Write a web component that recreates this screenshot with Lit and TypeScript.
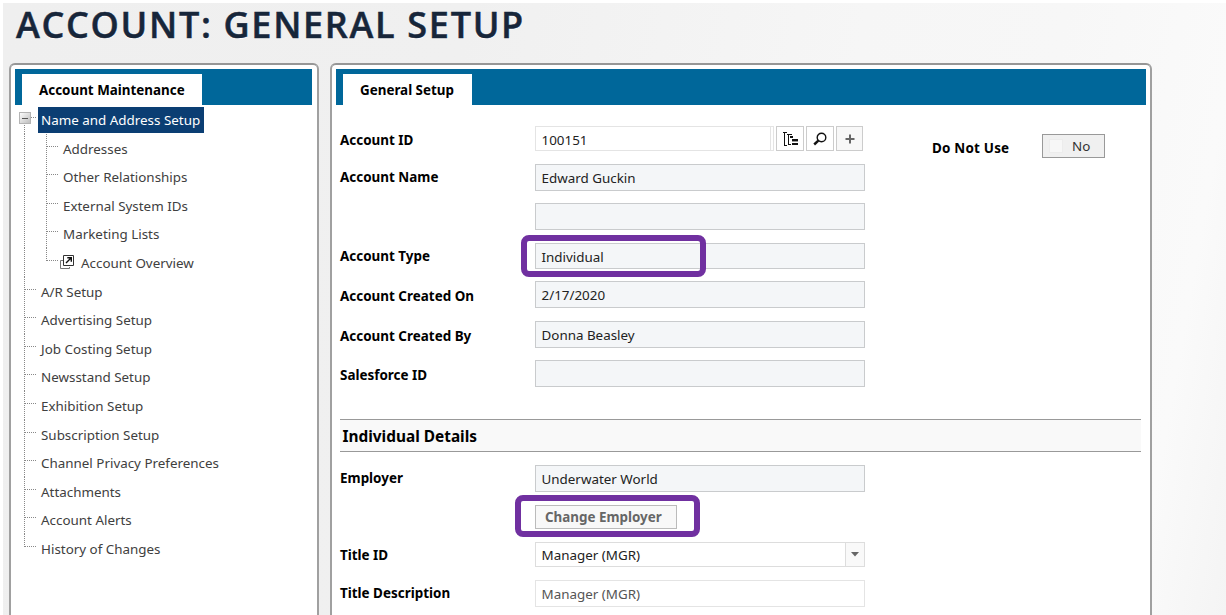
import { LitElement, html, css, svg, nothing } from "lit";
import { customElement } from "lit/decorators.js";
import { classMap } from "lit/directives/class-map.js";
import { styleMap } from "lit/directives/style-map.js";

type Field = { label: string; value: string; kind: string; gap: number; low?: boolean };

const children = ["Addresses", "Other Relationships", "External System IDs", "Marketing Lists", "Account Overview"];
const roots = [
  "A/R Setup", "Advertising Setup", "Job Costing Setup", "Newsstand Setup", "Exhibition Setup",
  "Subscription Setup", "Channel Privacy Preferences", "Attachments", "Account Alerts", "History of Changes",
];

const general: Field[] = [
  { label: "Account Name", value: "Edward Guckin", kind: "ro", gap: 39 },
  { label: "", value: "", kind: "ro", gap: 40 },
  { label: "Account Type", value: "Individual", kind: "ro short", gap: 38 },
  { label: "Account Created On", value: "2/17/2020", kind: "ro", gap: 40, low: true },
  { label: "Account Created By", value: "Donna Beasley", kind: "ro", gap: 39, low: true },
  { label: "Salesforce ID", value: "", kind: "ro", gap: 40, low: true },
];

@customElement("app-root")
export class AppRoot extends LitElement {
  static styles = css`
    :host {
      display: block; width: 1226px; height: 615px; overflow: hidden; box-sizing: border-box;
      border-left: 3px solid #fff; border-top: 3px solid #fff;
      font-family: "Noto Sans", "Open Sans", sans-serif; font-size: 13.4px; color: #404040;
      background: linear-gradient(100deg, #efefef 0, #f0f0f0 35%, #f6f6f6 65%, #f7f7f7 80%, #fafafa 93%, #f4f4f4 100%);
    }
    * { box-sizing: border-box; }
    h1 {
      margin: 0; height: 60px; padding-left: 13px; line-height: 44px; font-size: 36px; font-weight: 600;
      letter-spacing: 1.7px; -webkit-text-stroke: 0.5px #17263a;
      font-family: "Open Sans", sans-serif; color: #17263a; white-space: nowrap; text-shadow: 0 1px 1px #fff;
    }
    .cols { display: flex; gap: 11px; padding-left: 6px; align-items: flex-start; }
    .panel {
      height: 580px; background: #fff; border: 2px solid #a0a0a0; border-top-color: #969696;
      border-radius: 6px; padding: 4px;
    }
    .side { width: 310px; padding-right: 5px; }
    .main { width: 822px; }
    .bar { height: 36px; background: #00679a; padding: 5px 0 0 7px; display: flex; }
    .tab {
      background: #fff; height: 31px; line-height: 33px; padding: 0 17px; color: #000; font-weight: 700;
      font-size: 13.4px; white-space: nowrap;
    }
    .tab.a { width: 180px; }
    .tab.b { width: 129px; }
    .main .bar { width: 810px; }
    .tree { padding-left: 4px; display: flex; flex-direction: column; }
    .row { height: 28.6px; display: flex; white-space: nowrap; line-height: 30.4px; }
    .g { flex: none; }
    .guide { display: flex; }
    .link { flex: none; margin: 2px 4px 0 -4px; }
    .cur {
      background: #0b3e73; color: #fff; height: 26px; line-height: 26px; padding: 0 3px; margin: 2px 0 0 -3px; width: 166px;
    }
    .form { padding-left: 4px; position: relative; }
    .f { display: grid; grid-template-columns: 195px 1fr; }
    .l { font-weight: 700; font-size: 13.45px; color: #000; line-height: 27px; height: 27px; }
    .l.low { line-height: 31px; }
    .box {
      width: 330px; height: 27px; border: 1px solid #c9cbcd; background: #f4f6f8; padding-left: 5.5px;
      line-height: 27px; color: #222; white-space: nowrap;
    }
    .short { height: 26px; }
    .edit { background: #fff; border-color: #e4e4e4; color: #555; }
    .idrow { display: flex; height: 25px; }
    .idrow .box { width: 236px; height: 25px; line-height: 26px; color: #222; }
    .edge { width: 3px; height: 25px; border: 1px solid #e4e4e4; border-left: 0; margin-right: 2px; }
    .ib {
      width: 28px; height: 25px; border: 1px solid #ccc; background: #fff; margin-right: 2px; padding: 0; display: flex;
      align-items: center; justify-content: center;
    }
    .ib.p { background: #f8f8f8; width: 27px; }
    .head { padding-top: 21px; height: 59px; display: flex; }
    .head .l { line-height: 29px; }
    .dnu {
      font-weight: 700; font-size: 13.45px; color: #000; margin: 8px 0 0 67px; width: 110px; line-height: 29px;
      letter-spacing: 0.2px; white-space: nowrap;
    }
    .no {
      width: 63px; height: 24px; border: 1px solid #999; background: #f0f0f0; padding: 0 0 0 6px; margin-top: 8px;
      display: flex; align-items: center; color: #333; line-height: 24px;
    }
    .chk { width: 14px; height: 14px; background: #f7f7f7; border: 1px solid #ececec; margin-right: 9px; }
    .sec {
      height: 33px; border-top: 1px solid #999; border-bottom: 1px solid #999; background: #f9f9f9; width: 801px;
      padding-left: 2.5px; line-height: 34px; color: #000; font-weight: 700; font-size: 15.4px; margin: 19px 0 13px;
    }
    .emp { height: 37px; }
    .btn {
      width: 142px; height: 24px; border: 1px solid #bbb; background: #f8f8f8; color: #666; font: inherit;
      font-size: 13.4px; font-weight: 700; padding: 0 0 0 9px; text-align: left; line-height: 22px; white-space: nowrap;
    }
    .title { height: 38px; }
    .title .l { line-height: 26px; }
    .sel { width: 330px; height: 25px; display: flex; border: 1px solid #ddd; background: #fff; }
    .sv { flex: 1; padding-left: 5.5px; line-height: 25px; color: #222; }
    .ar { width: 19px; border-left: 1px solid #ddd; background: #f9f9f9; display: flex; align-items: center; justify-content: center; }
    .hl { position: absolute; border: 6px solid #7030a0; border-radius: 8px; }
    .hl.one { left: 185px; top: 130px; width: 185px; height: 42px; }
    .hl.two { left: 179px; top: 390px; width: 185px; height: 42px; }
  `;

  private field(f: Field) {
    return html`<div class="f" style=${styleMap({ height: f.gap + "px" })}>
      <div class=${classMap({ l: true, low: !!f.low })}>${f.label}</div>
      <div class="box ${f.kind}">${f.value}</div>
    </div>`;
  }

  private guide(depth: number, last: boolean, more: boolean) {
    return html`<svg width=${depth ? 44 : 22} height="29" shape-rendering="crispEdges" stroke="#888" fill="none" stroke-dasharray="1 1">
      ${more ? svg`<path d="M5.5 0V29"/>` : nothing}
      ${depth
        ? svg`<path d="M27.5 0V${last ? 13 : 29}M27.5 12.5H39"/>`
        : svg`<path d="M5.5 0V${last ? 13 : 29}M5.5 12.5H17"/>`}
    </svg>`;
  }

  render() {
    return html`
      <h1>ACCOUNT: GENERAL SETUP</h1>
      <div class="cols">
        <section class="panel side">
          <div class="bar"><div class="tab a">Account Maintenance</div></div>
          <div class="tree">
            <div class="row">
              <svg class="g" width="22" height="29" shape-rendering="crispEdges" fill="none">
                <defs><linearGradient id="g" x2="1" y2="1"><stop stop-color="#fff"/><stop offset="1" stop-color="#bbb"/></linearGradient></defs>
                <rect x="0.5" y="7.5" width="11" height="11" fill="url(#g)" stroke="#b4b4b4"/>
                <path d="M3 13.5H9" stroke="#555"/>
                <path d="M5.5 20V29M12 12.5H18" stroke="#888" stroke-dasharray="1 1"/>
              </svg>
              <div class="cur">Name and Address Setup</div>
            </div>
            ${children.map((c, i) => html`<div class="row">
              <span class="g guide">${this.guide(1, i === 4, true)}</span>
              ${i === 4 ? html`<svg class="link" width="18" height="28" fill="none">
                <path d="M4 10.5H1.5V18.5H10.5V17" stroke="#777"/>
                <path d="M4.500 5.500h10v10h-10z" fill="#fff" stroke="#333"/>
                <path d="M7 13l5-5M8.300 7.700H12.300V11.700" stroke="#111" stroke-width="1.400"/></svg>` : nothing}
              <span>${c}</span></div>`)}
            ${roots.map((c, i) => html`<div class="row"><span class="g guide">${this.guide(0, i === roots.length - 1, false)}</span><span>${c}</span></div>`)}
          </div>
        </section>
        <section class="panel main">
          <div class="bar"><div class="tab b">General Setup</div></div>
          <div class="form">
            <div class="head">
              <div class="f"><div class="l">Account ID</div>
                <div class="idrow">
                  <div class="box edit">100151</div><div class="edge"></div>
                  <div class="ib"><svg width="16" height="16" fill="none" stroke="#111" shape-rendering="crispEdges">
                    <path d="M1 1.500H5M2.500 1V14M2 14.500H5M5 3.500H10M6.500 4V14M6 13.500H9"/>
                    <path d="M8 6H11M10 9H16M10 13H16" stroke-width="2"/><path d="M10 10.500H16" stroke="#999"/></svg></div>
                  <div class="ib"><svg width="16" height="16" fill="none" stroke="#111"><circle cx="9.500" cy="6.500" r="4.300" stroke-width="1.400"/><path d="M6.300 9.700L2.200 13.500" stroke-width="2.400"/></svg></div>
                  <div class="ib p"><svg width="10" height="10" stroke="#666" stroke-width="2"><path d="M5 .5V9.500M.5 5H9.500"/></svg></div>
                </div>
              </div>
              <div class="dnu">Do Not Use</div>
              <div class="no"><span class="chk"></span>No</div>
            </div>
            ${general.map((f) => this.field(f))}
            <div class="sec">Individual Details</div>
            ${this.field({ label: "Employer", value: "Underwater World", kind: "ro", gap: 40 })}
            <div class="f emp"><span></span><button class="btn">Change Employer</button></div>
            <div class="f title"><div class="l">Title ID</div>
              <div class="sel"><div class="sv">Manager (MGR)</div><div class="ar"><svg width="8" height="5"><path d="M0 0H8L4 4.500Z" fill="#666"/></svg></div></div></div>
            ${this.field({ label: "Title Description", value: "Manager (MGR)", kind: "edit", gap: 30 })}
            <div class="hl one"></div><div class="hl two"></div>
          </div>
        </section>
      </div>`;
  }
}
